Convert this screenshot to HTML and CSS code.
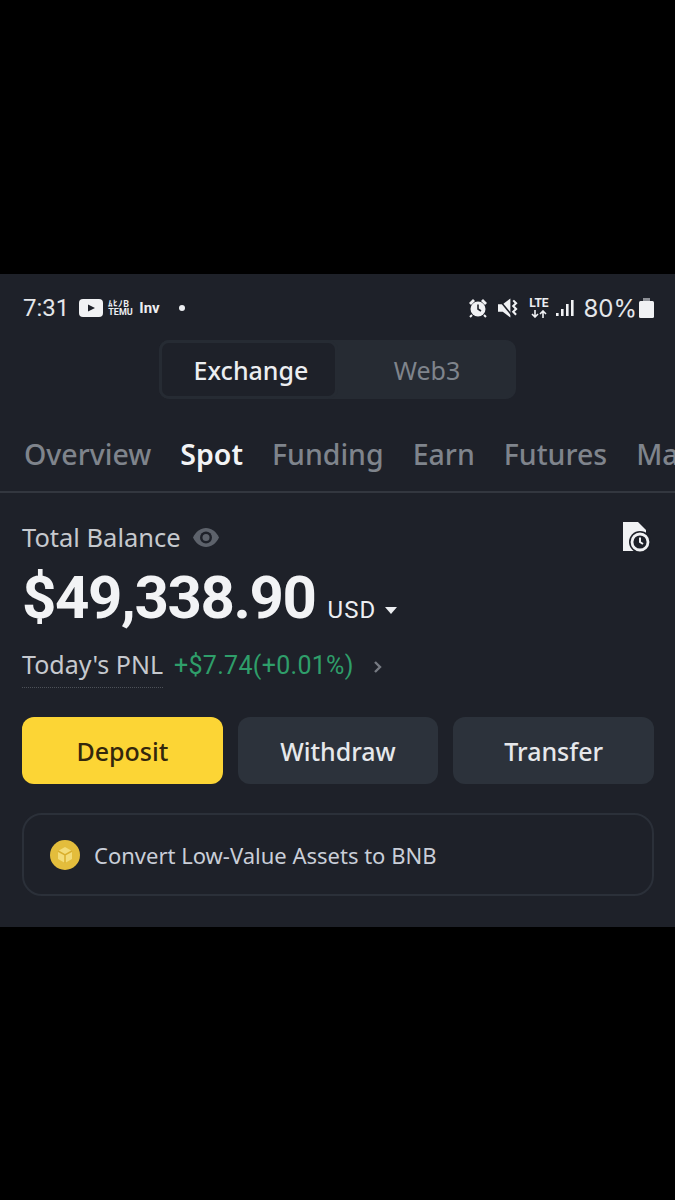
FILE: index.html
```html
<!DOCTYPE html>
<html lang="en">
<head>
  <meta charset="UTF-8">
  <meta name="viewport" content="width=device-width, initial-scale=1.0">
  <title>Wallet</title>
  <link rel="stylesheet" href="styles.css">
</head>
<body>

  <div class="screen">
    <div class="status-bar">
      <div class="status-left">
        <span class="clock">7:31</span>
        <svg class="yt" width="24" height="18" viewBox="0 0 24 18"><rect width="24" height="18" rx="4" fill="#f1f2f4"/><path d="M9 5.500l7 3.500-7 3.500z" fill="#1e2129"/></svg>
        <span class="temu"><span>ﾑﾋﾉB</span><span>TEMU</span></span>
        <span class="inv">Inv</span>
        <span class="dot"></span>
      </div>
      <div class="status-right">
        <svg class="alarm" width="20" height="20" viewBox="0 0 20 20"><circle cx="10" cy="11" r="7.500" fill="#f1f2f4"/><path d="M1 5l4-4 2 2-4 4zM19 5l-4-4-2 2 4 4z" fill="#f1f2f4"/><path d="M10 6.500V11l3 2" fill="none" stroke="#1e2129" stroke-width="1.600"/><path d="M4 17l-2 2M16 17l2 2" stroke="#f1f2f4" stroke-width="2"/></svg>
        <svg class="mute" width="20" height="20" viewBox="0 0 21 20"><path d="M0 6h5l8-6v20l-8-6H0z" fill="#f1f2f4"/><path d="M1 1l13 16" stroke="#1e2129" stroke-width="1.600"/><path d="M16 2l3 3-3 3 3 3-3 3 3 3" fill="none" stroke="#f1f2f4" stroke-width="2.200"/></svg>
        <span class="lte">
          <span>LTE</span>
          <svg width="18" height="8" viewBox="0 0 18 8"><path d="M5 0v7M2 4l3 3 3-3M13 8V1M10 4l3-3 3 3" fill="none" stroke="#f1f2f4" stroke-width="1.600"/></svg>
        </span>
        <svg class="signal" width="18" height="18" viewBox="0 0 18 18"><rect x="0" y="14" width="2.600" height="3" fill="#f1f2f4"/><rect x="5" y="10" width="2.600" height="7" fill="#f1f2f4"/><rect x="10" y="5" width="2.600" height="12" fill="#f1f2f4"/><rect x="15" y="1" width="2.600" height="16" fill="#f1f2f4"/></svg>
        <span class="battery-text">80%</span>
        <svg width="15" height="20" viewBox="0 0 15 20"><rect x="4" y="0" width="7" height="3" fill="#8d9096"/><rect x="0" y="3" width="15" height="17" rx="1.500" fill="#f1f2f4"/></svg>
      </div>
    </div>

    <div class="toggle-row">
      <div class="toggle">
        <div class="toggle-item active">Exchange</div>
        <div class="toggle-item">Web3</div>
      </div>
    </div>

    <div class="tabs">
      <span class="tab">Overview</span>
      <span class="tab active">Spot</span>
      <span class="tab">Funding</span>
      <span class="tab">Earn</span>
      <span class="tab">Futures</span>
      <span class="tab">Margin</span>
    </div>

    <div class="content">
      <div class="balance-head">
        <div class="balance-label">
          <span>Total Balance</span>
          <svg width="26" height="19" viewBox="0 0 26 19"><path d="M0 9.500C3 3.500 7.500 0 13 0s10 3.500 13 9.500C23 15.500 18.500 19 13 19S3 15.500 0 9.500z" fill="#5d626b"/><circle cx="13" cy="9.500" r="6" fill="#1e2129"/><circle cx="13" cy="9.500" r="3.500" fill="#5d626b"/></svg>
        </div>
        <svg class="history" width="28" height="31" viewBox="0 0 28 31"><path d="M0 0h15l8 8v21H0z" fill="#f1f2f4"/><circle cx="17" cy="20" r="11" fill="#1e2129"/><circle cx="17" cy="20" r="8" fill="none" stroke="#f1f2f4" stroke-width="2.800"/><path d="M17 15.500V20l3 2" fill="none" stroke="#f1f2f4" stroke-width="2"/></svg>
      </div>

      <div class="balance">
        <span class="amount">$49,338.90</span>
        <span class="currency">USD</span>
        <span class="caret"></span>
      </div>

      <div class="pnl">
        <span class="pnl-label">Today's PNL</span>
        <span class="pnl-value">+$7.74(+0.01%)</span>
        <svg width="10" height="14" viewBox="0 0 10 14"><path d="M2 2l5 5-5 5" fill="none" stroke="#767a82" stroke-width="2.400"/></svg>
      </div>

      <div class="actions">
        <button class="btn primary">Deposit</button>
        <button class="btn">Withdraw</button>
        <button class="btn">Transfer</button>
      </div>

      <div class="convert">
        <svg width="30" height="30" viewBox="0 0 30 30"><circle cx="15" cy="15" r="15" fill="#e3bd3c"/><path d="M15 7l7 4v8l-7 4-7-4v-8z" fill="#f3dc78"/><path d="M8 11l7 4 7-4M15 15v8" fill="none" stroke="#d9ae2c" stroke-width="1.500"/></svg>
        <span>Convert Low-Value Assets to BNB</span>
      </div>
    </div>
  </div>

</body>
</html>
```

FILE: styles.css
```css
body {
  font-family: 'Noto Sans', 'Roboto', sans-serif;
  background-color: #000;
  margin: 0;
  padding-top: 274px;
  overflow: hidden;
}

.screen {
  background-color: #1e2129;
  height: 653px;
  color: #eceef1;
  overflow: hidden;
}

.status-bar {
  display: flex;
  justify-content: space-between;
  align-items: center;
  height: 66px;
  padding: 2px 21px 0 23px;
  box-sizing: border-box;
}

.status-left, .status-right {
  display: flex;
  align-items: center;
}

.clock {
  font-family: 'Roboto', sans-serif;
  font-size: 24px;
  color: #e4e6e9;
  margin-right: 10px;
}

.temu {
  display: flex;
  flex-direction: column;
  font-family: 'Roboto', sans-serif;
  font-size: 9px;
  font-weight: 700;
  line-height: 8px;
  margin-left: 5px;
  width: 26px;
}

.inv {
  font-family: 'Roboto', sans-serif;
  font-size: 15px;
  font-weight: 700;
  margin-left: 5px;
}

.dot {
  width: 6px;
  height: 6px;
  border-radius: 50%;
  background-color: #eceef1;
  margin-left: 19px;
}

.alarm {
  margin-right: 10px;
}

.mute {
  margin-right: 10px;
}

.lte {
  display: flex;
  flex-direction: column;
  align-items: center;
  gap: 1px;
  width: 21px;
  font-family: 'Roboto', sans-serif;
  font-size: 12px;
  font-weight: 700;
  line-height: 11px;
  margin-right: 7px;
}

.signal {
  margin-right: 9px;
}

.battery-text {
  font-family: 'Inter', sans-serif;
  font-size: 24px;
  color: #e4e6e9;
  margin-right: 2px;
}

.toggle-row {
  display: flex;
  justify-content: center;
}

.toggle {
  display: flex;
  width: 357px;
  height: 59px;
  box-sizing: border-box;
  background-color: #262b33;
  border-radius: 10px;
}

.toggle-item {
  flex: 1;
  display: flex;
  align-items: center;
  justify-content: center;
  font-size: 25px;
  color: #7f848c;
  border-radius: 10px;
}

.toggle-item.active {
  flex: none;
  width: 179px;
  padding-left: 5px;
  background-color: #1e2129;
  border: 3px solid #262b33;
  box-sizing: border-box;
  font-weight: 500;
  color: #eceef1;
}

.tabs {
  display: flex;
  gap: 29px;
  height: 74px;
  margin-top: 20px;
  padding: 0 24px 3px;
  box-sizing: border-box;
  align-items: center;
  font-size: 28.500px;
  font-weight: 500;
  color: #7f848c;
  border-bottom: 2px solid #33373f;
  white-space: nowrap;
  overflow: hidden;
}

.tab.active {
  color: #f2f3f5;
  font-weight: 600;
}

.content {
  padding: 0 21px 0 22px;
}

.balance-head {
  display: flex;
  justify-content: space-between;
  align-items: center;
  height: 44px;
  margin-top: 22px;
}

.balance-label {
  display: flex;
  align-items: center;
  gap: 12px;
  font-size: 25.500px;
  color: #c6c9ce;
}

.history {
  margin-right: 3px;
}

.balance {
  display: flex;
  align-items: baseline;
  height: 88px;
  padding-top: 3px;
  box-sizing: border-box;
}

.amount {
  font-family: 'Roboto', sans-serif;
  font-size: 60px;
  font-weight: 700;
  letter-spacing: -1.400px;
  color: #f2f3f5;
  margin-right: 12px;
}

.currency {
  font-family: 'Roboto', sans-serif;
  font-size: 24px;
  letter-spacing: 1px;
  color: #eceef1;
}

.caret {
  width: 0;
  height: 0;
  margin-left: 9px;
  margin-top: 11px;
  border-left: 6px solid transparent;
  border-right: 6px solid transparent;
  border-top: 7px solid #eceef1;
  align-self: center;
}

.pnl {
  display: flex;
  align-items: baseline;
  gap: 11px;
  height: 42px;
  font-size: 25px;
}

.pnl-label {
  padding-bottom: 6px;
  border-bottom: 1px dotted #4d5158;
  color: #c6c9ce;
}

.pnl-value {
  font-family: 'Roboto', sans-serif;
  font-size: 25px;
  letter-spacing: 0.300px;
  color: #2f9e6a;
  margin-right: 8px;
}

.actions {
  display: flex;
  gap: 15px;
  margin-top: 28px;
}

.btn {
  flex: 1;
  height: 67px;
  border: none;
  border-radius: 12px;
  background-color: #2c323b;
  color: #e6e8eb;
  font-family: inherit;
  font-size: 25px;
  font-weight: 500;
}

.btn.primary {
  background-color: #fcd535;
  color: #33270c;
}

.convert {
  display: flex;
  align-items: center;
  gap: 14px;
  height: 83px;
  margin-top: 29px;
  padding: 0 26px;
  box-sizing: border-box;
  border: 2px solid #2b3039;
  border-radius: 20px;
  font-size: 22px;
  color: #c9ced8;
}
```
